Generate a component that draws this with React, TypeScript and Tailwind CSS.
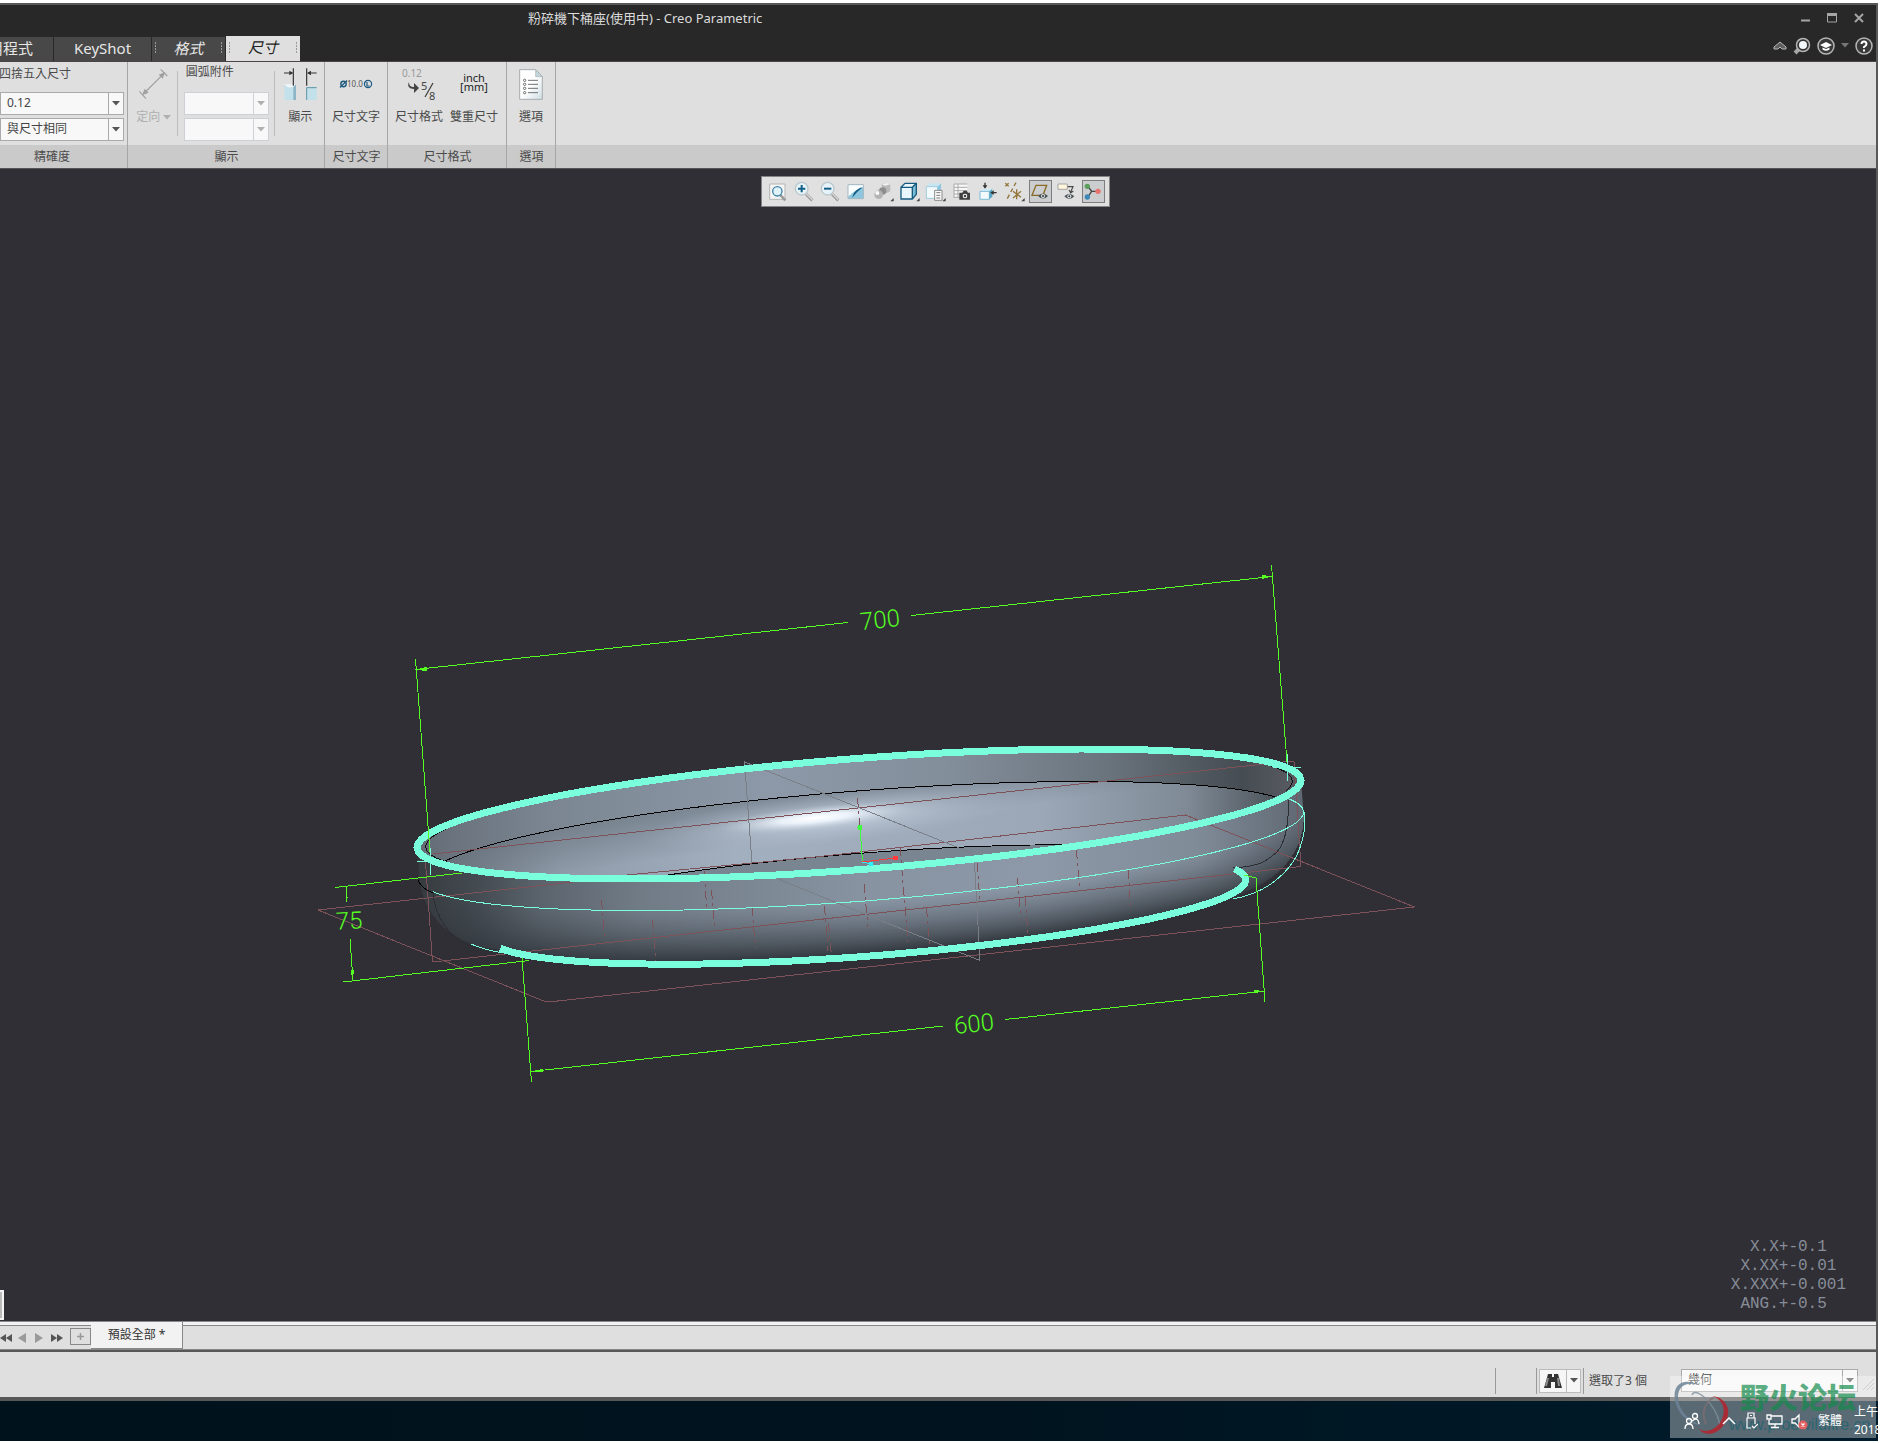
import type { ReactNode } from "react";

const UI = "font-['Noto_Sans','Noto_Sans_CJK_TC',sans-serif]";

/* ---------- small shared controls ---------- */

function Combo({ label, options, disabled, className }: { label: string; options: string[]; disabled?: boolean; className: string }) {
  return (
    <div className={`relative h-[23px] ${className}`}>
      <select
        aria-label={label}
        disabled={disabled}
        className={`block h-full w-full appearance-none rounded-none border bg-[#f8f8f8] pb-px pl-[6px] text-xs text-[#444] opacity-100 ${disabled ? "border-[#cdd1d5]" : "border-[#aaaaaa]"}`}
      >
        {options.map((o) => (
          <option key={o}>{o}</option>
        ))}
      </select>
      <span className={`pointer-events-none absolute inset-y-0 right-0 flex w-4 items-center justify-center border ${disabled ? "border-[#cdd1d5]" : "border-[#aaaaaa]"}`}>
        <Caret color={disabled ? "#b0b0b0" : "#555555"} />
      </span>
    </div>
  );
}

function Caret({ color }: { color: string }) {
  return (
    <svg width="8" height="5" viewBox="0 0 8 5">
      <path d="M0 0h8L4 4.5z" fill={color} />
    </svg>
  );
}

function Tool({ label, icon, disabled, className = "" }: { label: string; icon: ReactNode; disabled?: boolean; className?: string }) {
  return (
    <button disabled={disabled} className={`flex flex-col items-center ${className}`}>
      <span className="flex h-9 items-center justify-center">{icon}</span>
      <span className={`mt-1 flex h-[22px] items-center gap-[3px] text-xs whitespace-nowrap ${disabled ? "text-[#b0b0b0]" : "text-[#4a4a4a]"}`}>
        {label}
        {disabled && <Caret color="#b0b0b0" />}
      </span>
    </button>
  );
}

function Group({ title, children, className, titleClass = "" }: { title: string; children: ReactNode; className: string; titleClass?: string }) {
  return (
    <section className={`flex shrink-0 flex-col border-r border-[#a6a6a6] ${className}`}>
      <div className="flex flex-1 px-1">{children}</div>
      <h2 className={`flex h-[23px] items-center justify-center bg-[#cacaca] pl-px text-xs text-[#4a4a4a] ${titleClass}`}>{title}</h2>
    </section>
  );
}

/* ---------- ribbon icons ---------- */

const OrientIcon = () => (
  <svg width="32" height="32" viewBox="0 0 96 96" fill="none" stroke="#a0a0a0" strokeWidth="3.5">
    <path d="M16 78L78 16M68 4l20 20M4 70l20 22" />
    <path d="M12 82l8-20 12 12zM82 12L62 20l12 12z" fill="#a0a0a0" stroke="none" />
  </svg>
);

const ShowIcon = () => (
  <svg width="33" height="33" viewBox="0 0 99 99">
    <path d="M1 50l10 8h18l7-8v46H1z" fill="#c3e1ea" />
    <path d="M1 49h34l-7 9H11z" fill="#eef6f9" />
    <path d="M28 58l8-9v47h-8z" fill="#8cb4c4" />
    <path d="M68 58h30v38H68z" fill="#c3e1ea" />
    <path d="M68 96V59h30" fill="none" stroke="#5d93a8" strokeWidth="3" />
    <path d="M28 1v52M68 1v52M0 15h24M98 15H73" fill="none" stroke="#333" strokeWidth="3.5" />
    <path d="M28 15l-12-7v14zM69 15l12-7v14z" fill="#333" />
  </svg>
);

const DimTextIcon = () => (
  <svg width="34" height="14" viewBox="0 0 34 14">
    <circle cx="4.5" cy="7" r="2.7" fill="none" stroke="#1c5a80" strokeWidth="1.4" />
    <path d="M1 10.5L8 3.5" stroke="#1c5a80" strokeWidth="1.2" />
    <text x="8" y="10" fontSize="8" fill="#555">10.0</text>
    <circle cx="29" cy="7" r="3.6" fill="none" stroke="#1c5a80" strokeWidth="1.2" />
    <path d="M28 5v4h2.5" fill="none" stroke="#1c5a80" strokeWidth="1.2" />
  </svg>
);

const DimFormatIcon = () => (
  <svg width="34" height="34" viewBox="0 0 34 34">
    <text x="0" y="10" fontSize="10" fill="#999">0.12</text>
    <path d="M7 15c0 4 2 5 5 5v-4l5 5-5 5v-4c-5 0-7-3-5-7z" fill="#444" />
    <text x="19" y="23" fontSize="11" fill="#444">5</text>
    <text x="27" y="33" fontSize="11" fill="#444">8</text>
    <path d="M23 30l8-14" stroke="#444" strokeWidth="1.3" />
  </svg>
);

const OptionsIcon = () => (
  <svg width="24" height="31" viewBox="0 0 72 93">
    <defs>
      <linearGradient id="page" x1="0" y1="0" x2="1" y2="1">
        <stop offset="0.5" stopColor="#ffffff" />
        <stop offset="1" stopColor="#cfdde4" />
      </linearGradient>
    </defs>
    <path d="M2 2h48l20 20v69H2z" fill="url(#page)" stroke="#a8adb0" strokeWidth="3" />
    <path d="M50 2v21h20z" fill="#c3d7df" stroke="#a8adb0" strokeWidth="2" />
    <g fill="none" stroke="#555" strokeWidth="2.5">
      {[34, 46, 58, 71].map((y) => (
        <g key={y}>
          <circle cx="17" cy={y} r="3.5" />
          <path d={`M27 ${y}h30`} />
        </g>
      ))}
    </g>
  </svg>
);

/* ---------- graphics toolbar ---------- */

const Flyout = () => <path d="M68 54v10H58z" fill="#444" />;

const Lens = ({ sign }: { sign: string }) => (
  <>
    <path d="M42 42l19 19" stroke="#9a9a9a" strokeWidth="9" />
    <path d="M43 41l18 18" stroke="#d5d5d5" strokeWidth="4" />
    <circle cx="29" cy="26" r="19" fill="#e6f4fa" stroke="#b9c6cc" strokeWidth="4" />
    <path d={sign} stroke="#155f86" strokeWidth="6" />
  </>
);

const Eye = ({ x, y }: { x: number; y: number }) => (
  <g transform={`translate(${x} ${y})`}>
    <path d="M-15 0Q0-15 15 0Q0 15-15 0z" fill="#4a5458" />
    <circle r="6" fill="#dfe6e8" />
    <circle r="3" fill="#333" />
  </g>
);

const viewTools: { name: string; pressed?: boolean; art: ReactNode }[] = [
  {
    name: "重新調整",
    art: (
      <>
        <path d="M11 12h46v46H11z" fill="#f5f5f5" stroke="#b5b5b5" strokeWidth="3" />
        <path d="M42 44l16 17" stroke="#9a9a9a" strokeWidth="8" />
        <circle cx="34" cy="34" r="14" fill="#dff1f9" stroke="#3f83a5" strokeWidth="4" />
      </>
    ),
  },
  { name: "放大", art: <Lens sign="M29 15v22M18 26h22" /> },
  { name: "縮小", art: <Lens sign="M18 26h22" /> },
  {
    name: "重繪",
    art: (
      <>
        <path d="M12 14h46v42H12z" fill="#8cc7df" />
        <path d="M12 14h46v8Q34 30 12 50z" fill="#fafdfe" />
        <path d="M12 14h46v42H12z" fill="none" stroke="#a5b8c0" strokeWidth="3" />
        <path d="M24 54L30 38Q42 24 56 22Q40 34 24 54z" fill="#155f86" />
      </>
    ),
  },
  {
    name: "顯示樣式",
    art: (
      <>
        <path d="M32 12l18-3 8 4v20l-8 5H34z" fill="#b9b9b9" />
        <path d="M32 12l18-3 8 4-16 4z" fill="#f2f2f2" />
        <circle cx="35" cy="33" r="11" fill="#8d8d8d" />
        <circle cx="23" cy="44" r="13" fill="#b4b4b4" />
        <circle cx="19" cy="39" r="6" fill="#fafafa" />
        <Flyout />
      </>
    ),
  },
  {
    name: "已儲存方向",
    art: (
      <>
        <path d="M12 22L24 10h34v33L46 57H12z" fill="#e9f6fb" />
        <path d="M46 22l12-12v33L46 57z" fill="#7cbbd6" />
        <path d="M12 22L24 10h34v33L46 57H12zM12 22h34v35M46 22l12-12" fill="none" stroke="#155a7f" strokeWidth="4" />
        <Flyout />
      </>
    ),
  },
  {
    name: "視圖管理員",
    art: (
      <>
        <path d="M10 20l10-10h34L44 20z" fill="#c8e6f1" />
        <path d="M10 20h34v35H10z" fill="#f3fafc" stroke="#9fcde0" strokeWidth="3" />
        <path d="M44 20l10-10v34H44z" fill="#8cc7df" />
        <path d="M35 31h22v30H35z" fill="#fff" stroke="#888" strokeWidth="3" />
        <path d="M40 38h12M40 46h12M40 54h12" stroke="#777" strokeWidth="3" />
        <Flyout />
      </>
    ),
  },
  {
    name: "透視圖",
    art: (
      <>
        <path d="M12 12h40v42H12z" fill="#f8f8f8" />
        <path d="M12 12h40M12 22h40M12 32h40M12 42h20M12 52h18M12 12v42M24 12v42" stroke="#aaa" strokeWidth="3" />
        <path d="M28 38h9l4-6h9l4 6h6v21H28z" fill="#3f3f3f" />
        <circle cx="45" cy="48" r="7" fill="#fff" />
        <circle cx="45" cy="48" r="4" fill="#3f3f3f" />
      </>
    ),
  },
  {
    name: "剖面",
    art: (
      <>
        <path d="M12 34l9-8h28l-9 8z" fill="#d3edf6" />
        <path d="M12 34h28v24H12z" fill="#f3fafc" stroke="#7cbbd6" strokeWidth="3" />
        <path d="M40 34l9-8v24l-9 8z" fill="#59a6c7" />
        <path d="M27 8v14M62 38H48" stroke="#333" strokeWidth="4" />
        <path d="M27 26l-7-10h14zM43 38l10-7v14z" fill="#333" />
      </>
    ),
  },
  {
    name: "基準顯示篩選器",
    art: (
      <>
        <path d="M10 10l10 9M20 10l-10 9M42 8l-6 10M32 26l-6 10M22 44l-6 12M44 28v30M33 34l24 18M57 34L33 54" stroke="#93763a" strokeWidth="4" />
        <Flyout />
      </>
    ),
  },
  {
    name: "平面顯示",
    pressed: true,
    art: (
      <>
        <path d="M21 16h32L42 46H9z" fill="none" stroke="#8a6a26" strokeWidth="4" />
        <Eye x={42} y={48} />
      </>
    ),
  },
  {
    name: "註解顯示",
    art: (
      <>
        <path d="M9 12h28v16H9z" fill="#fff6df" stroke="#a5a5a5" strokeWidth="3" />
        <path d="M38 20h16L46 38M42 30l5 9 8-6" fill="none" stroke="#4a4a4a" strokeWidth="3.5" />
        <Eye x={43} y={49} />
      </>
    ),
  },
  {
    name: "旋轉中心",
    pressed: true,
    art: (
      <>
        <path d="M20 18l12 16-12 18M32 34h18" fill="none" stroke="#444" strokeWidth="4" />
        <circle cx="19" cy="19" r="8" fill="#5d9e5d" />
        <circle cx="51" cy="34" r="8" fill="#e8736c" />
        <circle cx="19" cy="51" r="8" fill="#3d86b8" />
      </>
    ),
  },
];

function ViewToolbar() {
  return (
    <div className="absolute inset-x-0 top-[7px] flex justify-center pr-[5px]">
      <div className="flex h-[31px] w-[349px] items-center justify-between border border-[#858585] bg-[#e0e0e0] px-1">
        {viewTools.map((t) => (
          <button
            key={t.name}
            aria-label={t.name}
            aria-pressed={t.pressed}
            className={`flex size-[23px] items-center justify-center border ${t.pressed ? "border-[#7d7d7d] bg-[#cbcdce]" : "border-transparent"}`}
          >
            <svg viewBox="0 0 72 72" className="size-6 shrink-0" fill="none">
              {t.art}
            </svg>
          </button>
        ))}
      </div>
    </div>
  );
}

/* ---------- 3D model ---------- */

type Ring = { cx: number; cy: number; k: number };

const RIM: Ring = { cx: 859, cy: 814, k: 1 };
const MID: Ring = { cx: 861.5, cy: 845.5, k: 1 };
const BASE: Ring = { cx: 867, cy: 908.5, k: 0.857 };

// Point of a tilted ring, angle in degrees. 0 is the right end, 90 the front.
function at(r: Ring, deg: number) {
  const t = (deg * Math.PI) / 180;
  const x = r.cx + r.k * 442 * Math.cos(t);
  const y = r.cy + r.k * (-33.5 * Math.cos(t) + 55.7 * Math.sin(t));
  return `${x.toFixed(1)} ${y.toFixed(1)}`;
}

function arc(r: Ring, from: number, to: number) {
  const n = 90;
  const pts = [];
  for (let i = 0; i <= n; i++) pts.push(at(r, from + ((to - from) * i) / n));
  return pts.join("L");
}

// Quarter round between the wall and the base, drawn from the bottom up.
const fillet = Array.from({ length: 80 }, (_, i) => {
  const s = 1 - i / 79;
  return {
    ring: { cx: 861.5 + 5.5 * s, cy: 845.5 + 63 * s, k: 0.857 + 0.143 * Math.sqrt(1 - s * s) },
    dark: Math.min(1, 1.15 * Math.pow(s, 1.25)),
  };
});

const axes = [
  "M601.5 900L605 941", "M652.5 920L656 961", "M704 871L707 911", "M711.5 890L715 931", "M752 907L755.5 948",
  "M824.5 906L828 951", "M828.5 923L831.5 956", "M864 884L868 927", "M900 847L908 942", "M926.5 908L929.5 945",
  "M977 863L980 902", "M1017.5 878L1021 919", "M1025 897L1028 934", "M1076.5 850L1079.5 890", "M1128.5 870L1130.5 910",
  "M857.5 798L860 827",
];

function Model() {
  return (
    <svg viewBox="0 169 1876 1152" preserveAspectRatio="xMidYMid slice" className="absolute inset-0 h-full w-full" fill="none">
      <defs>
        <linearGradient id="wall" gradientUnits="userSpaceOnUse" x1="417" y1="0" x2="1304" y2="0">
          <stop offset="0" stopColor="#363b3f" />
          <stop offset="0.07" stopColor="#444b51" />
          <stop offset="0.14" stopColor="#5b646d" />
          <stop offset="0.25" stopColor="#717b86" />
          <stop offset="0.5" stopColor="#8793a1" />
          <stop offset="0.7" stopColor="#8d99a8" />
          <stop offset="0.88" stopColor="#808b98" />
          <stop offset="1" stopColor="#5f6872" />
        </linearGradient>
        <linearGradient id="inner" gradientUnits="userSpaceOnUse" x1="417" y1="0" x2="1304" y2="0">
          <stop offset="0" stopColor="#646c76" />
          <stop offset="0.15" stopColor="#7b8692" />
          <stop offset="0.4" stopColor="#8d99a8" />
          <stop offset="0.6" stopColor="#838e9b" />
          <stop offset="0.78" stopColor="#6a747d" />
          <stop offset="0.93" stopColor="#454c52" />
          <stop offset="1" stopColor="#5c5e64" />
        </linearGradient>
        <linearGradient id="bowl" gradientUnits="userSpaceOnUse" x1="430" y1="0" x2="1300" y2="0">
          <stop offset="0" stopColor="#69737d" />
          <stop offset="0.15" stopColor="#8f9ba9" />
          <stop offset="0.35" stopColor="#a2afbf" />
          <stop offset="0.7" stopColor="#9ca8b8" />
          <stop offset="0.87" stopColor="#7f8a96" />
          <stop offset="1" stopColor="#40474c" />
        </linearGradient>
        <linearGradient id="bowlTop" gradientUnits="userSpaceOnUse" x1="860" y1="782" x2="870" y2="850">
          <stop offset="0" stopColor="#5f6973" stopOpacity="0.55" />
          <stop offset="0.7" stopColor="#5f6973" stopOpacity="0" />
        </linearGradient>
        <radialGradient id="shine">
          <stop offset="0" stopColor="#ffffff" />
          <stop offset="0.35" stopColor="#f2f8ff" stopOpacity="0.85" />
          <stop offset="1" stopColor="#b9c6d6" stopOpacity="0" />
        </radialGradient>
        <radialGradient id="halo">
          <stop offset="0" stopColor="#dfe9f5" stopOpacity="0.8" />
          <stop offset="1" stopColor="#a9b6c6" stopOpacity="0" />
        </radialGradient>
        <clipPath id="rimClip">
          <path d={`M${arc(RIM, 0, 360)}Z`} />
        </clipPath>
      </defs>

      {/* Outer body */}
      {fillet.map(({ ring, dark }, i) => (
        <g key={i} shapeRendering="crispEdges">
          <path d={`M${arc(ring, 0, 360)}Z`} fill="url(#wall)" />
          <path d={`M${arc(ring, 0, 360)}Z`} fill="#343a40" fillOpacity={dark} />
        </g>
      ))}
      <path d={`M${arc(RIM, 180, 0)}L${arc(MID, 0, 180)}Z`} fill="url(#wall)" />

      {/* Inside of the bowl */}
      <path d={`M${arc(RIM, 0, 360)}Z`} fill="url(#inner)" />
      <g clipPath="url(#rimClip)">
        <path d={`M${arc({ ...MID, k: 0.985 }, 0, 360)}Z`} fill="url(#bowl)" />
        <path d={`M${arc({ ...MID, k: 0.985 }, 0, 360)}Z`} fill="url(#bowlTop)" />
        <ellipse cx="835" cy="818" rx="200" ry="26" fill="url(#halo)" transform="rotate(-6 835 818)" />
        <ellipse cx="815" cy="818" rx="100" ry="12" fill="url(#shine)" transform="rotate(-6 815 818)" />
        <path d={`M${arc({ ...BASE, cy: 900.5 }, 0, 360)}Z`} fill="#7a8592" />
        <g shapeRendering="crispEdges">
          <path d={`M${arc({ ...MID, k: 0.985 }, 196, 342)}`} stroke="#000" />
          <path d={`M${arc({ ...BASE, cy: 900.5 }, 230, 302)}`} stroke="#000" />
          <path d={`M${arc({ ...RIM, k: 0.98 }, 150, 205)}M${arc({ ...RIM, k: 0.98 }, -30, 10)}`} stroke="#111" />
        </g>
      </g>

      <g shapeRendering="crispEdges">
        {/* Datum planes and axes */}
        <g stroke="#7d5359">
          <path d="M573 882L318 910L545 1001.5h8L1414.5 907L1185.5 815L820 856.5L627 875" />
          <path d="M433 854L1292 761l2 1L1301 866.5L432.5 962L425 855" />
          {axes.map((d) => (
            <path key={d} d={d} strokeDasharray="9 4 3 4" />
          ))}
        </g>
        <path d="M752 863L744.5 762L820 792L971.5 853M778 879L980 960.5L974.5 863" stroke="#7a7e87" />
        <path d="M433 893c2 20 10 34 24 46 10 8 28 11 40 10M1289 800c-1 22-2 40-12 52-10 8-14 14-44 16" stroke="#2b2f34" />

        {/* Tangent edges and silhouette */}
        <g stroke="#7affdd">
          <path d={`M${arc(MID, 166, -15)}`} />
          <path d="M1304 812v20c-4 24-14 38-33 52q-16 11-38 15M471 944q14 6 32 9" />
          <path d="M430 848v27M417 861h14M1287 754v27M1273 767h28" />
        </g>
        <path d="M418 880q4 9 15 13" stroke="#000" />

        {/* Selected edges */}
        <g stroke="#7affdd" strokeWidth="7">
          <path d={`M${arc(RIM, 0, 360)}Z`} />
          <path d={`M${arc(BASE, 165.5, -14)}`} />
        </g>

        {/* Coordinate system */}
        <path d="M862.5 862L860 827" stroke="#3dff3d" />
        <path d="M862.5 862l33-4" stroke="#ff3b3b" />
        <path d="M862.5 862l9 2" stroke="#2ef0ff" />
        <circle cx="860" cy="827.5" r="2.5" fill="#3dff3d" />
        <circle cx="895.5" cy="858" r="2.5" fill="#ff3b3b" />
        <circle cx="871" cy="864" r="2.5" fill="#2ef0ff" />

        {/* Dimensions */}
        <g stroke="#55ff22">
          <path d="M415.5 659L430 852M1271.5 565L1287 762M415.5 669.5L848 622.5M911 615.5L1272 576.5" />
          <path d="M522 958L531.5 1082M1244 875l12 3L1265 1002M531 1071.5L943 1026M1005 1019.5L1265 991" />
          <path d="M335 887.5L462 873M343 982L529 960.5M346 887L347 902M350 939L353 981" />
          <path d="M418 669.5l8-2v3zM1270 576.5l-8-1v3zM533 1071.5l9-2v2zM1263 991.5l-9-1v2z" fill="#55ff22" />
          <path d="M346 889l1 8h-1zM352.5 979l1-9h-2z" fill="#55ff22" />
        </g>
      </g>
      <g fill="#55ff22" textAnchor="middle" className="font-['Roboto',sans-serif] text-[24px] font-light">
        <text x="880" y="628" transform="rotate(-6 880 619)">700</text>
        <text x="974" y="1032" transform="rotate(-6 974 1023)">600</text>
        <text x="349" y="929" transform="rotate(-3 349 920)">75</text>
      </g>
    </svg>
  );
}

/* ---------- window chrome ---------- */

function TitleBar() {
  return (
    <header className="bg-[#282828]">
      <div className="flex h-[31px] items-start">
        <h1 className="pt-[3px] pl-[528px] text-[13px] leading-5 whitespace-nowrap text-[#dcdcdc]">粉碎機下桶座(使用中) - Creo Parametric</h1>
        <div className="ml-auto flex gap-[9px] pt-[3px] pr-2">
          <button aria-label="最小化" className="size-[18px]">
            <svg viewBox="0 0 18 18"><path d="M5 12.5h9" stroke="#a5a5a5" strokeWidth="2" /></svg>
          </button>
          <button aria-label="最大化" className="size-[18px]">
            <svg viewBox="0 0 18 18" fill="none"><path d="M4.5 6v8h9V6z" stroke="#a5a5a5" /><path d="M4 6.5h10" stroke="#a5a5a5" strokeWidth="3" /></svg>
          </button>
          <button aria-label="關閉" className="size-[18px]">
            <svg viewBox="0 0 18 18"><path d="M5 6l8 8M13 6l-8 8" stroke="#a5a5a5" strokeWidth="2" /></svg>
          </button>
        </div>
      </div>
      <nav className="flex h-[26px] items-end border-b border-[#4b4548] text-[15px] text-[#e6e6e6]">
        <a href="#apps" className="flex h-6 w-[54px] justify-end border-r border-[#282828] bg-[#484848] pr-5 leading-[22px] whitespace-nowrap">應用程式</a>
        <a href="#keyshot" className="h-6 w-[98px] border-r border-[#282828] bg-[#484848] text-center leading-[22px]">KeyShot</a>
        <a href="#format" className="flex h-6 w-[73px] items-center justify-between bg-[#484848] px-[3px] pb-[2px] italic">
          <Grip />格式<Grip />
        </a>
        <a href="#dimension" className="ml-px flex h-[25px] w-[74px] items-center justify-between bg-[#dfdfdf] px-[3px] pb-[2px] text-[#222] italic">
          <Grip />尺寸<Grip />
        </a>
        <div className="ml-auto flex h-[25px] items-center gap-[6px] pr-[3px] pb-[6px]">
          <button aria-label="收合功能區">
            <svg width="14" height="9" viewBox="0 0 14 9"><path d="M1 6l6-5 6 5v2H9L7 6 5 8H1z" fill="#5f5f5f" stroke="#b5b5b5" /></svg>
          </button>
          <button aria-label="搜尋">
            <svg width="18" height="18" viewBox="0 0 18 18" fill="none">
              <path d="M6 12l-4 4" stroke="#a5a5a5" strokeWidth="4" />
              <circle cx="10" cy="8" r="6.5" fill="#333" stroke="#b5b5b5" strokeWidth="1.5" />
              <circle cx="10" cy="8" r="4" fill="#f2f8fa" />
            </svg>
          </button>
          <button aria-label="學習">
            <svg width="18" height="18" viewBox="0 0 18 18">
              <circle cx="9" cy="9" r="8" fill="#383838" stroke="#b5b5b5" strokeWidth="1.5" />
              <path d="M3 8l6-3 6 3-6 3zM5.5 10.5v2q3.5 2.5 7 0v-2L9 12z" fill="#fff" />
            </svg>
          </button>
          <Caret color="#777777" />
          <button aria-label="說明">
            <svg width="18" height="18" viewBox="0 0 18 18">
              <circle cx="9" cy="9" r="8" fill="#383838" stroke="#b5b5b5" strokeWidth="1.5" />
              <path d="M6.5 7q0-2.5 2.5-2.5T11.5 7Q11.5 8.5 9 10v1M9 12.5v2" fill="none" stroke="#fff" strokeWidth="2" />
            </svg>
          </button>
        </div>
      </nav>
    </header>
  );
}

const Grip = () => (
  <svg width="1" height="12" viewBox="0 0 1 12">
    <path d="M0 0h1v2H0zM0 3h1v2H0zM0 6h1v2H0zM0 9h1v2H0z" fill="#999" />
  </svg>
);

function Ribbon() {
  return (
    <div className="flex h-[107px] border-b border-[#555] bg-[#dfdfdf]">
      <Group title="精確度" className="w-[128px]" titleClass="pr-6">
        <div className="-ml-1 flex w-32 flex-col">
          <p className="-ml-px h-[30px] pt-1 text-xs leading-4 whitespace-nowrap text-[#4a4a4a]">四捨五入尺寸</p>
          <Combo label="四捨五入尺寸" options={["0.12"]} className="w-[124px]" />
          <Combo label="公差精確度" options={["與尺寸相同"]} className="mt-[3px] w-[124px]" />
        </div>
      </Group>
      <Group title="顯示" className="w-[197px]">
        <Tool label="定向" icon={<OrientIcon />} disabled className="w-[44px] pt-1" />
        <div className="mt-[9px] ml-px h-[65px] w-px bg-[#bdbdbd]" />
        <div className="ml-[6px] w-[86px]">
          <p className="h-[30px] pt-[2px] pl-[2px] text-xs leading-4 text-[#4a4a4a]">圓弧附件</p>
          <Combo label="圓弧附件" options={[""]} disabled className="w-full" />
          <Combo label="圓弧附件樣式" options={[""]} disabled className="mt-[3px] w-full" />
        </div>
        <div className="mt-[9px] ml-[5px] h-[65px] w-px bg-[#bdbdbd]" />
        <Tool label="顯示" icon={<ShowIcon />} className="ml-[5px] w-10 pt-1" />
      </Group>
      <Group title="尺寸文字" className="w-[63px]">
        <Tool label="尺寸文字" icon={<DimTextIcon />} className="w-full pt-1" />
      </Group>
      <Group title="尺寸格式" className="w-[119px]">
        <Tool label="尺寸格式" icon={<DimFormatIcon />} className="w-[55px] pt-1" />
        <Tool
          label="雙重尺寸"
          icon={<span className="mb-1 text-[11px] leading-[9px] text-[#222]">inch<br />[mm]</span>}
          className="w-[57px] pt-1"
        />
      </Group>
      <Group title="選項" className="w-[49px]">
        <Tool label="選項" icon={<OptionsIcon />} className="w-full pt-1" />
      </Group>
      <div className="flex flex-1 flex-col justify-end">
        <div className="h-[23px] bg-[#cacaca]" />
      </div>
    </div>
  );
}

function SheetTabs() {
  const arrows = [
    ["第一個", "M6 0v8L0 4zM12 0v8L6 4z", "#555"],
    ["上一個", "M9 -1v10L1 4z", "#9a9a9a"],
    ["下一個", "M1 -1v10L9 4z", "#9a9a9a"],
    ["最後一個", "M0 0v8l6-4zM6 0v8l6-4z", "#555"],
  ];
  return (
    <div className="border-t border-[#888] bg-[#f2f2f2]">
      <div className="mt-[3px] flex h-[25px] border-y border-[#888] bg-[#dfdfdf]">
        <div className="flex w-[70px] items-center gap-[5px]">
          {arrows.map(([name, d, color]) => (
            <button key={name} aria-label={name} className="shrink-0">
              <svg width="12" height="10" viewBox="0 -1 12 10"><path d={d} fill={color} /></svg>
            </button>
          ))}
        </div>
        <button aria-label="新增" className="mt-[2px] flex h-[17px] w-[21px] items-center justify-center border border-[#888]">
          <svg width="7" height="7" viewBox="0 0 7 7"><path d="M3.5 0v7M0 3.5h7" stroke="#999" strokeWidth="1.5" /></svg>
        </button>
        <button className="-mt-1 h-[27px] w-[92px] border-r border-b border-[#888] bg-[#f2f2f2] text-xs text-[#333]">預設全部 *</button>
      </div>
    </div>
  );
}

function StatusBar() {
  return (
    <footer className="flex h-[45px] items-center justify-end bg-[#dfdfdf] pt-[14px] pb-[2px]">
      <div className="h-[26px] w-px bg-[#999]" />
      <div className="ml-10 h-[26px] w-px bg-[#999]" />
      <div className="ml-[2px] flex h-6 w-[42px] border border-[#bbb] bg-[#f6f6f6]">
        <button aria-label="尋找" className="flex flex-1 items-center justify-center border-r border-[#bbb]">
          <svg width="18" height="16" viewBox="0 0 18 16">
            <path d="M4 1h4v3h2V1h4l4 14h-7V9H7v6H0z" fill="#333" />
            <path d="M4 5L2 13M14 5l1 8" stroke="#8a8a8a" strokeWidth="2" />
          </svg>
        </button>
        <button aria-label="尋找選項" className="flex w-[13px] items-center justify-center"><Caret color="#555555" /></button>
      </div>
      <div className="ml-[2px] h-[26px] w-px bg-[#999]" />
      <p className="w-[97px] pl-[5px] text-xs text-[#4a4a4a]">選取了3 個</p>
      <Combo label="選取篩選器" options={["幾何"]} className="w-[177px]" />
      <svg width="17" height="20" viewBox="0 0 17 20" className="ml-px"><path d="M4 19L15 8M8 19l7-7M12 19l3-3" stroke="#b5b5b5" /></svg>
    </footer>
  );
}

function Taskbar() {
  return (
    <div className="flex h-10 items-center justify-end overflow-hidden bg-linear-to-r from-[#00131d] via-[#00131e] to-[#001c2c] text-white">
      <div className="relative z-10 flex items-center text-xs">
        <svg width="16" height="18" viewBox="0 0 16 18" fill="none" stroke="#fff" strokeWidth="1.3">
          <circle cx="5" cy="9" r="2.5" /><path d="M1 17q0-5 4-5t4 5" />
          <circle cx="11" cy="4" r="2.5" /><path d="M8 9q6-5 7 3" />
        </svg>
        <svg width="14" height="8" viewBox="0 0 14 8" fill="none" stroke="#fff" strokeWidth="1.5" className="ml-[22px]"><path d="M1 7l6-6 6 6" /></svg>
        <svg width="14" height="18" viewBox="0 0 14 18" fill="none" stroke="#fff" strokeWidth="1.2" className="ml-2">
          <path d="M4 6V1h6v5M6 3.5h2M7 16H3V6h8v6M8 14l2 2 4-4" />
        </svg>
        <svg width="17" height="15" viewBox="0 0 17 15" fill="none" stroke="#fff" strokeWidth="1.3" className="ml-2">
          <path d="M5 2h11v8H3V6M1 1h4v4H1zM9 10v3M5 13.5h8" />
        </svg>
        <svg width="17" height="17" viewBox="0 0 17 17" fill="none" stroke="#fff" strokeWidth="1.3" className="ml-2">
          <path d="M1 6h3l4-4v12l-4-4H1z" />
          <circle cx="12" cy="12" r="4.5" fill="#e0605f" stroke="none" /><path d="M10.5 10.5l3 3M13.5 10.5l-3 3" />
        </svg>
        <span className="ml-[10px] text-xs">繁體</span>
        <p className="ml-3 w-6 overflow-hidden text-xs leading-[18px] whitespace-nowrap">上午<br />2018</p>
      </div>
    </div>
  );
}

function Watermark() {
  return (
    <div className="pointer-events-none absolute right-[5px] bottom-[5px] h-[62px] w-[206px] overflow-hidden bg-white/35">
      <svg viewBox="0 0 64 62" className="absolute top-0 left-0 h-[62px] w-16" fill="none">
        <path d="M29 9C14 1 2 8 5 24C8 40 22 50 32 49C18 45 8 33 8 21C8 10 16 5 29 9z" fill="#6d8496" fillOpacity="0.85" />
        <path d="M22 19q2-6 12 2c8 7 14 18 16 28" stroke="#7f8f9a" strokeWidth="1.5" strokeOpacity="0.8" />
        <path d="M43 20C56 22 62 34 56 45C50 58 36 62 29 53C38 58 48 52 52 43C56 33 53 24 43 20z" fill="#b5222c" fillOpacity="0.85" />
        <path d="M44 21C34 27 31 38 36 48" stroke="#7f6f72" strokeWidth="2" strokeOpacity="0.7" />
      </svg>
      <p className="absolute top-1 left-[70px] font-['Noto_Sans_CJK_SC',sans-serif] text-[29px] leading-8 font-black whitespace-nowrap text-[#148a4c]/70">野火论坛</p>
      <p className="absolute top-[39px] left-[59px] font-['Liberation_Sans',sans-serif] text-[16px] leading-5 whitespace-nowrap text-[#1d6370]/80">www.proewildfire.cn</p>
    </div>
  );
}

export default function App() {
  return (
    <div className={`relative flex min-h-screen flex-col overflow-hidden bg-white pt-[3px] pr-[3px] pb-[2px] ${UI}`}>
      <div className="flex flex-1 flex-col border-t-2 border-r-2 border-b-4 border-[#585858]">
        <TitleBar />
        <Ribbon />
        <main className="relative min-h-[600px] flex-1 overflow-hidden bg-[#302f35]">
          <Model />
          <ViewToolbar />
          <div className="absolute bottom-px left-0 h-[30px] w-[4px] border-2 border-l-0 border-[#f5f5f5] bg-[#bbb]" />
          <div className="absolute right-[30px] bottom-[7px] text-center font-['Liberation_Mono',monospace] text-[16px] leading-[19px] whitespace-pre text-[#878d99]">
            <p>X.X+-0.1</p>
            <p>X.XX+-0.01</p>
            <p>X.XXX+-0.001</p>
            <p>{"ANG.+-0.5 "}</p>
          </div>
        </main>
        <SheetTabs />
        <div className="h-[2px] bg-[#585858]" />
        <StatusBar />
      </div>
      <Taskbar />
      <Watermark />
    </div>
  );
}
